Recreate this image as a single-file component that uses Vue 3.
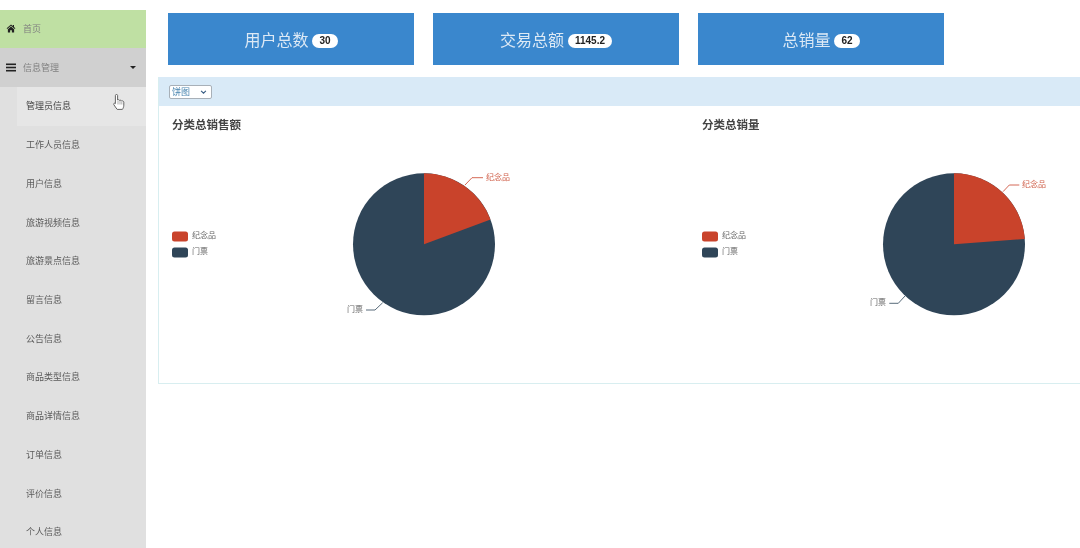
<template>
  <div class="page">
    <aside class="sidebar">
      <a class="nav-home">
        <svg class="nav-icon home-icon" viewBox="0 0 16 14" width="10" height="9">
          <path d="M8 0.5 L1 6.6 L2 7.8 L8 2.6 L14 7.8 L15 6.6 L12.8 4.7 V1.2 H11 V3.1 Z" fill="#222" />
          <path d="M8 3.8 L3 8 V13.4 H6.6 V9.6 H9.4 V13.4 H13 V8 Z" fill="#222" />
        </svg>
        <span>首页</span>
      </a>
      <a class="nav-group">
        <svg class="nav-icon" viewBox="0 0 10 9" width="10" height="9">
          <rect y="0.5" width="10" height="1.6" fill="#222" />
          <rect y="3.7" width="10" height="1.6" fill="#222" />
          <rect y="6.9" width="10" height="1.6" fill="#222" />
        </svg>
        <span>信息管理</span>
        <i class="caret"></i>
      </a>
      <ul class="sub-menu">
        <li v-for="(item, i) in menuItems" :key="item" :class="{ active: i === 0 }">{{ item }}</li>
      </ul>
    </aside>

    <main class="content">
      <div class="stats">
        <div v-for="stat in stats" :key="stat.label" class="stat-card">
          <span>{{ stat.label }}</span>
          <b class="badge">{{ stat.value }}</b>
        </div>
      </div>

      <section class="panel">
        <div class="panel-head">
          <div class="select-wrap">
            <select class="chart-select">
              <option>饼图</option>
            </select>
            <svg class="select-arrow" viewBox="0 0 8 5" width="7" height="4">
              <polyline points="1,1 4,4 7,1" fill="none" stroke="#3b5f85" stroke-width="1.4" />
            </svg>
          </div>
        </div>
        <div class="charts">
          <div v-for="chart in charts" :key="chart.title" class="chart">
            <h4 class="chart-title">{{ chart.title }}</h4>
            <svg class="chart-svg" width="530" height="277" viewBox="0 0 530 277">
              <rect x="13" y="125.5" width="16" height="10" rx="2.5" fill="#c9432b" />
              <text x="33" y="130" class="legend-text" dominant-baseline="middle">纪念品</text>
              <rect x="13" y="141.5" width="16" height="10" rx="2.5" fill="#2f4558" />
              <text x="33" y="145.5" class="legend-text" dominant-baseline="middle">门票</text>

              <circle cx="265" cy="138.3" r="71" fill="#2f4558" />
              <path :d="slicePath(chart.share)" fill="#c9432b" />

              <polyline :points="chart.redLine" fill="none" stroke="#c9432b" stroke-width="0.8" />
              <text :x="chart.redText[0]" :y="chart.redText[1]" class="label-red" dominant-baseline="middle">纪念品</text>
              <polyline :points="chart.darkLine" fill="none" stroke="#2f4558" stroke-width="0.8" />
              <text :x="chart.darkText[0]" :y="chart.darkText[1]" class="label-dark" text-anchor="end" dominant-baseline="middle">门票</text>
            </svg>
          </div>
        </div>
      </section>
    </main>

    <svg class="hand" viewBox="0 0 12 16" width="12" height="16">
      <path d="M2.4 1.5 C2.4 0.1 4.6 0.1 4.6 1.5 V6 C5.4 5.5 6.3 5.7 6.5 6.4 C7.3 6 8.2 6.3 8.4 7 C9.4 6.6 10.7 7 10.8 8.2 V11.2 C10.8 13 10 14.6 9.4 15.4 H4.2 C3.2 14 1.6 12.2 0.8 10.6 C0.3 9.5 1.4 8.6 2.4 9.6 Z" fill="#fff" stroke="#555" stroke-width="0.9" stroke-linejoin="round" />
      <path d="M5 7 V10.5 M7 7 V10.5 M8.8 8 V10.5" fill="none" stroke="#777" stroke-width="0.6" />
    </svg>
  </div>
</template>

<script setup>
const menuItems = [
  '管理员信息',
  '工作人员信息',
  '用户信息',
  '旅游视频信息',
  '旅游景点信息',
  '留言信息',
  '公告信息',
  '商品类型信息',
  '商品详情信息',
  '订单信息',
  '评价信息',
  '个人信息'
]

const stats = [
  { label: '用户总数', value: '30' },
  { label: '交易总额', value: '1145.2' },
  { label: '总销量', value: '62' }
]

const charts = [
  {
    title: '分类总销售额',
    share: 0.193,
    redLine: '306,79 313,71.7 324,71.7',
    redText: [327, 71.5],
    darkLine: '223.7,196.7 216,204 207,204',
    darkText: [204, 203.5]
  },
  {
    title: '分类总销量',
    share: 0.238,
    redLine: '314,85.7 320.3,79 330.3,79',
    redText: [333, 78.5],
    darkLine: '216,190 209.3,197.3 200.3,197.3',
    darkText: [197, 197]
  }
]

// slice starts at 12 o'clock and runs clockwise
const slicePath = (share) => {
  const cx = 265
  const cy = 138.3
  const r = 71
  const angle = share * Math.PI * 2
  const x = cx + r * Math.sin(angle)
  const y = cy - r * Math.cos(angle)
  return `M${cx} ${cy} L${cx} ${cy - r} A${r} ${r} 0 0 1 ${x.toFixed(2)} ${y.toFixed(2)} Z`
}
</script>

<style>
html,
body {
  margin: 0;
  background: #fff;
}
</style>

<style scoped>
.page {
  position: relative;
  display: flex;
  height: 548px;
  overflow: hidden;
  background: #fff;
  font-family: "Noto Sans CJK SC", "Liberation Sans", sans-serif;
  filter: blur(0.55px);
}

.sidebar {
  flex: 0 0 146px;
  margin-top: 10px;
  background: #e0e0e0;
  font-size: 9px;
  line-height: 12px;
  color: #666;
}

.nav-home,
.nav-group {
  display: flex;
  align-items: center;
  padding: 0 10px 0 6px;
  color: #808080;
}

.nav-home {
  height: 38px;
  background: #bfe0a3;
}

.nav-group {
  height: 39px;
  background: #d0d0d0;
}

.nav-icon {
  margin-right: 7px;
  flex-shrink: 0;
}

.home-icon {
  margin-bottom: 2px;
}

.caret {
  width: 0;
  height: 0;
  margin-left: auto;
  border-left: 3px solid transparent;
  border-right: 3px solid transparent;
  border-top: 3px solid #222;
}

.sub-menu {
  margin: 0;
  padding: 0;
  list-style: none;
}

.sub-menu li {
  display: flex;
  align-items: center;
  height: 38.72px;
  padding-left: 26px;
  color: #5a5a5a;
}

.sub-menu li.active {
  margin-left: 17px;
  padding-left: 9px;
  background: #e6e6e6;
  color: #444;
}

.content {
  flex: 1;
  min-width: 0;
  overflow: hidden;
}

.stats {
  display: flex;
  gap: 19px;
  padding: 13px 0 0 22px;
}

.stat-card {
  display: flex;
  flex: 0 0 246px;
  align-items: center;
  justify-content: center;
  gap: 4px;
  height: 52px;
  background: #3a87cd;
  font-size: 16px;
  color: #dce9f5;
}

.badge {
  margin-top: 4px;
  padding: 0 7px;
  height: 14px;
  border-radius: 7px;
  background: #fff;
  font-family: "Liberation Sans", sans-serif;
  font-size: 10px;
  line-height: 14px;
  color: #222;
}

.panel {
  width: 1000px;
  margin: 12px 0 0 12px;
  border: 1px solid #d8eef0;
  border-top: 0;
  box-sizing: border-box;
}

.panel-head {
  display: flex;
  align-items: center;
  height: 29px;
  padding-left: 10px;
  background: #d9eaf7;
}

.select-wrap {
  position: relative;
  width: 43px;
  height: 14px;
}

.chart-select {
  display: block;
  appearance: none;
  box-sizing: border-box;
  width: 43px;
  height: 14px;
  padding: 0 0 1px 2px;
  border: 1px solid #a8b0b8;
  border-radius: 2px;
  background: #fff;
  font-family: inherit;
  font-size: 9px;
  line-height: 11px;
  color: #4a86b0;
}

.select-arrow {
  position: absolute;
  top: 5px;
  right: 5px;
}

.charts {
  display: flex;
}

.chart {
  position: relative;
  flex: 0 0 530px;
  height: 277px;
}

.chart-title {
  position: absolute;
  top: 11px;
  left: 13px;
  margin: 0;
  font-size: 11.5px;
  line-height: 14px;
  font-weight: 700;
  color: #444;
}

.chart-svg {
  display: block;
}

.legend-text,
.label-dark {
  font-size: 8px;
  fill: #666;
}

.label-red {
  font-size: 8px;
  fill: #d0604a;
}

.hand {
  position: absolute;
  left: 113px;
  top: 94px;
}
</style>
